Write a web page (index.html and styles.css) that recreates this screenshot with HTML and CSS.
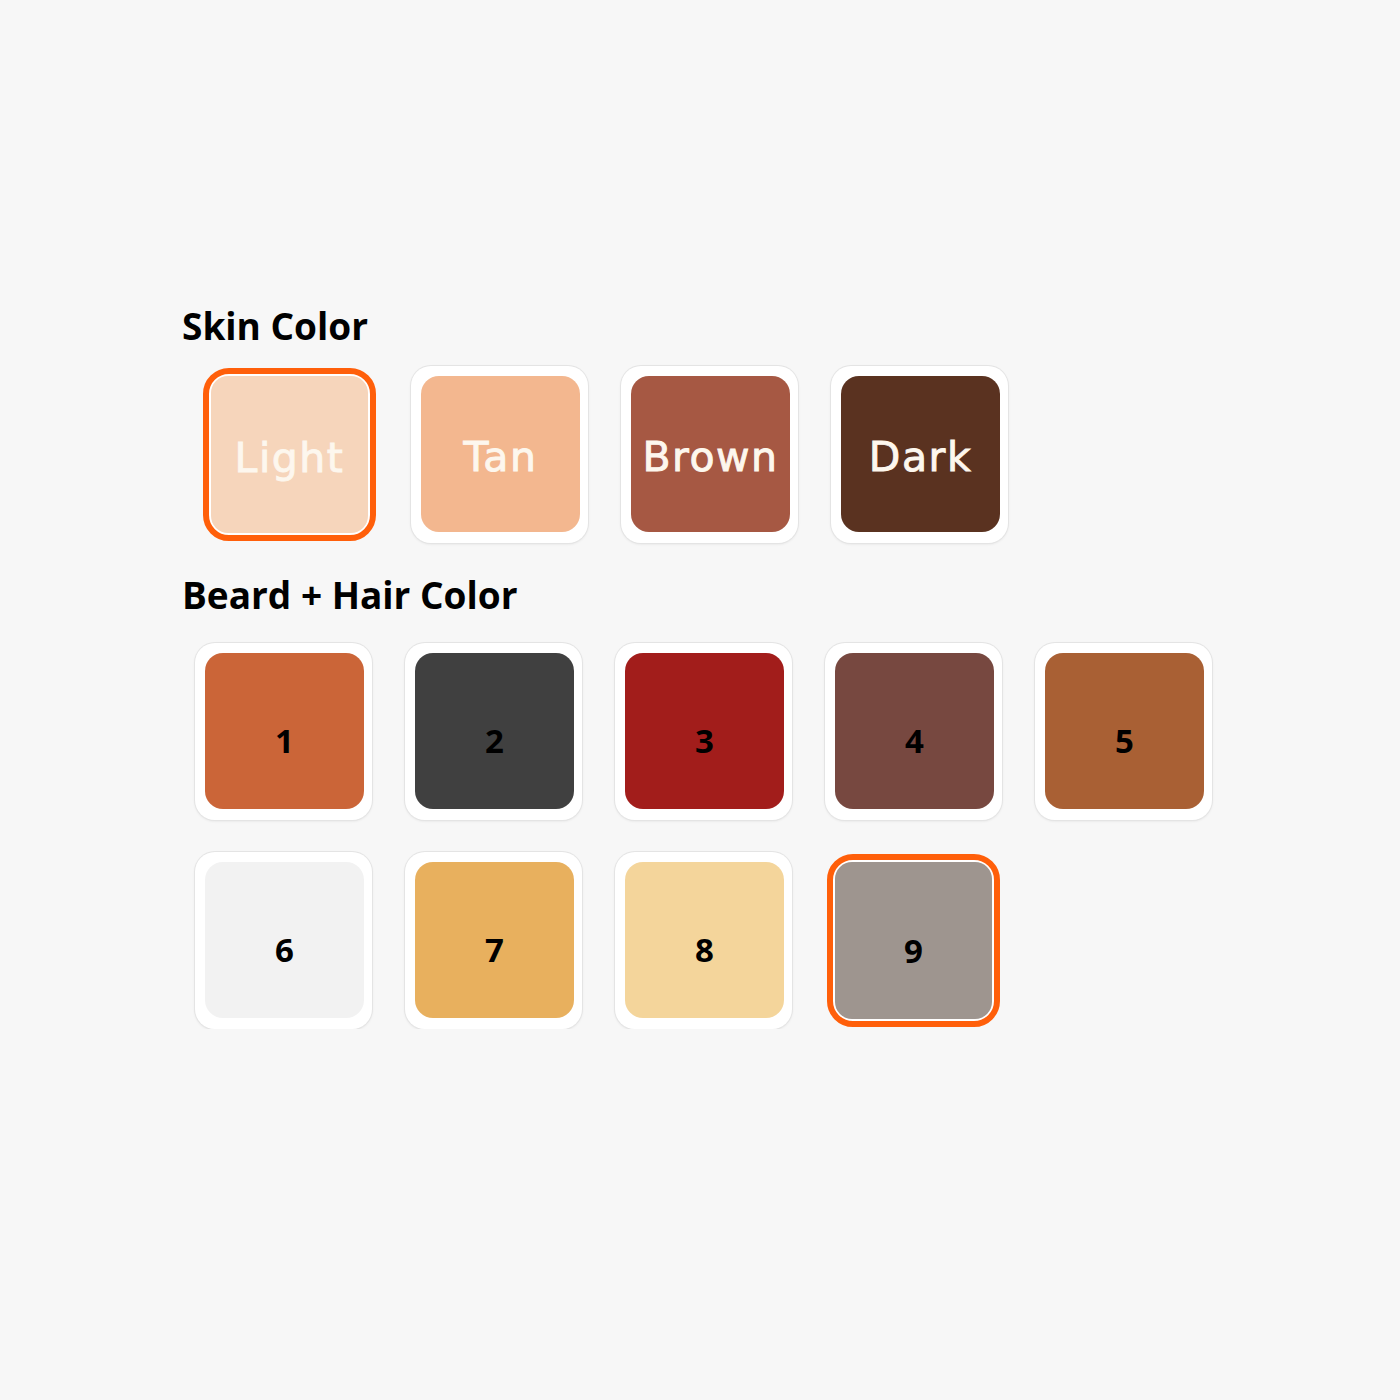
FILE: index.html
```html
<!DOCTYPE html>
<html lang="en">
<head>
<meta charset="UTF-8" />
<meta name="viewport" content="width=device-width, initial-scale=1.0" />
<title>Character Colors</title>
<link rel="stylesheet" href="styles.css">
</head>
<body>

<div class="container">
  <!-- Skin -->
  <h2>Skin Color</h2>
  <div class="grid grid-skin">
    <div class="tile selected"><div class="swatch skin-light"><span class="label">Light</span></div></div>
    <div class="tile"><div class="swatch skin-tan"><span class="label">Tan</span></div></div>
    <div class="tile"><div class="swatch skin-brown"><span class="label">Brown</span></div></div>
    <div class="tile"><div class="swatch skin-dark"><span class="label">Dark</span></div></div>
  </div>

  <!-- Beard + hair -->
  <h2 class="second">Beard + Hair Color</h2>
  <div class="grid grid-hair">
    <div class="tile"><div class="swatch hair-1"><span class="num">1</span></div></div>
    <div class="tile"><div class="swatch hair-2"><span class="num">2</span></div></div>
    <div class="tile"><div class="swatch hair-3"><span class="num">3</span></div></div>
    <div class="tile"><div class="swatch hair-4"><span class="num">4</span></div></div>
    <div class="tile"><div class="swatch hair-5"><span class="num">5</span></div></div>
    <div class="tile"><div class="swatch hair-6"><span class="num">6</span></div></div>
    <div class="tile"><div class="swatch hair-7"><span class="num">7</span></div></div>
    <div class="tile"><div class="swatch hair-8"><span class="num">8</span></div></div>
    <div class="tile selected"><div class="swatch hair-9"><span class="num">9</span></div></div>
  </div>
</div>

</body>
</html>
```

FILE: styles.css
```css
body {
  font-family: "Open Sans", sans-serif;
  background-color: #f7f7f7;
  margin: 0;
  padding: 0;
}

.container {
  padding: 304px 0 0 182px;
}

h2 {
  font-size: 37px;
  font-weight: 700;
  line-height: 44px;
  margin: 0;
  color: #000;
}

h2.second {
  margin-top: 30px;
}

.grid {
  display: grid;
  grid-template-columns: repeat(5, 177px);
  column-gap: 33px;
  row-gap: 32px;
}

.grid-skin {
  margin-top: 18px;
  padding-left: 19px;
}

.grid-hair {
  margin-top: 26px;
  padding-left: 13px;
}

.tile {
  width: 177px;
  height: 177px;
  box-sizing: border-box;
  padding: 10px 8px 11px 10px;
  background: #fff;
  border-radius: 20px;
  box-shadow: 0 0 0 1px #e4e4e4, 0 1px 3px rgba(0,0,0,0.1);
  display: flex;
}

.tile.selected {
  width: 173px;
  height: 173px;
  margin: 2px;
  padding: 2px;
  border: 6px solid #ff5f0a;
  border-radius: 26px;
  box-shadow: none;
}

.swatch {
  flex: 1;
  border-radius: 18px;
  display: flex;
  align-items: center;
  justify-content: center;
}

.selected .swatch {
  border-radius: 17px;
}

.label {
  font-family: "DejaVu Sans", sans-serif;
  font-weight: 400;
  font-size: 41px;
  color: #fdf7ee;
  letter-spacing: 1.5px;
  -webkit-text-stroke: 0.9px #fdf7ee;
  margin-top: 6px;
}

.num {
  font-size: 33px;
  font-weight: 700;
  color: #000;
  margin-top: 19px;
}

.skin-light { background: #f6d5bb; }
.skin-tan { background: #f3b78f; }
.skin-brown { background: #a65843; }
.skin-dark { background: #5a3220; }

.hair-1 { background: #cb6538; }
.hair-2 { background: #404040; }
.hair-3 { background: #a21d1b; }
.hair-4 { background: #774840; }
.hair-5 { background: #a96034; }
.hair-6 { background: #f2f2f2; }
.hair-7 { background: #e8b05e; }
.hair-8 { background: #f4d59b; }
.hair-9 { background: #9e958f; }
```
